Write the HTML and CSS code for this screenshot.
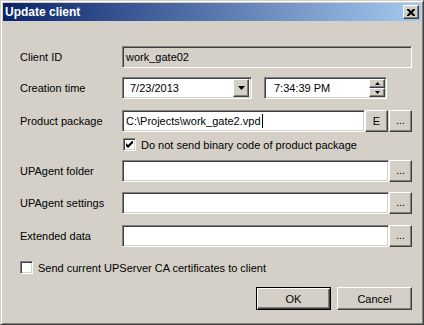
FILE: index.html
```html
<!DOCTYPE html>
<html lang="en">

<head>
    <meta charset="UTF-8">
    <title>Update client</title>
    <link rel="stylesheet" href="styles.css">
</head>

<body>

    <div class="window">
        <div class="titlebar">
            <span class="title">Update client</span>
            <div class="btn caption-btn">
                <svg width="8" height="7" viewBox="0 0 8 7">
                    <path d="M0 0h2l2 2 2-2h2v1l-2.5 2.5 2.5 2.5v1h-2l-2-2-2 2h-2v-1l2.5-2.5-2.5-2.5z" fill="#000" />
                </svg>
            </div>
        </div>

        <div class="content">
            <div class="row row-id">
                <label>Client ID</label>
                <div class="edit disabled">work_gate02</div>
            </div>

            <div class="row row-time">
                <label>Creation time</label>
                <div class="edit date">
                    <span class="value">7/23/2013</span>
                    <div class="btn drop-btn">
                        <svg width="7" height="4" viewBox="0 0 7 4"><path d="M0 0h7l-3.5 4z" fill="#000" /></svg>
                    </div>
                </div>
                <div class="edit time">
                    <span class="value">7:34:39 PM</span>
                    <div class="spin">
                        <div class="btn spin-btn">
                            <svg width="5" height="3" viewBox="0 0 5 3"><path d="M2.5 0l2.5 3h-5z" fill="#000" /></svg>
                        </div>
                        <div class="btn spin-btn">
                            <svg width="5" height="3" viewBox="0 0 5 3"><path d="M0 0h5l-2.5 3z" fill="#000" /></svg>
                        </div>
                    </div>
                </div>
            </div>

            <div class="row row-pkg">
                <label>Product package</label>
                <div class="edit">C:\Projects\work_gate2.vpd<span class="caret"></span></div>
                <div class="btn small-btn">E</div>
                <div class="btn small-btn dots">...</div>
            </div>

            <div class="check-row check-binary">
                <div class="checkbox">
                    <svg width="7" height="7" viewBox="0 0 7 7"><path d="M0 2l2 2 5-5v3l-5 5-2-2z" fill="#000" /></svg>
                </div>
                <span>Do not send binary code of product package</span>
            </div>

            <div class="row row-folder">
                <label>UPAgent folder</label>
                <div class="edit"></div>
                <div class="btn small-btn dots">...</div>
            </div>

            <div class="row row-settings">
                <label>UPAgent settings</label>
                <div class="edit"></div>
                <div class="btn small-btn dots">...</div>
            </div>

            <div class="row row-extended">
                <label>Extended data</label>
                <div class="edit"></div>
                <div class="btn small-btn dots">...</div>
            </div>

            <div class="check-row check-ca">
                <div class="checkbox"></div>
                <span>Send current UPServer CA certificates to client</span>
            </div>

            <div class="actions">
                <div class="btn push-btn default">OK</div>
                <div class="btn push-btn">Cancel</div>
            </div>
        </div>
    </div>

</body>

</html>
```

FILE: styles.css
```css
:root {
    --face: #d4d0c8;
    --shadow: #808080;
    --dark: #404040;
    --light: #ffffff;
}

body {
    margin: 0;
    font-family: 'Liberation Sans', Arial, sans-serif;
    font-size: 11px;
    color: #000;
    background: var(--face);
}

.window {
    width: 424px;
    height: 325px;
    box-sizing: border-box;
    background: var(--face);
    border: 1px solid;
    border-color: var(--face) var(--dark) var(--dark) var(--face);
    box-shadow: inset 1px 1px var(--light), inset -1px -1px var(--shadow);
    padding: 2px;
}

.titlebar {
    height: 18px;
    display: flex;
    align-items: center;
    justify-content: space-between;
    padding: 0 2px;
    background: linear-gradient(to right, #0a246a, #a6caf0);
}

.title {
    color: #fff;
    font-weight: bold;
    font-size: 12px;
}

/* raised 3d edge used by every button */
.btn {
    box-sizing: border-box;
    background: var(--face);
    border: 1px solid;
    border-color: var(--light) var(--dark) var(--dark) var(--light);
    box-shadow: inset -1px -1px var(--shadow);
    display: flex;
    align-items: center;
    justify-content: center;
}

.caption-btn {
    width: 16px;
    height: 14px;
}

.content {
    padding: 0 9px 0 17px;
}

.row {
    display: flex;
    align-items: center;
    height: 22px;
}

.row label {
    width: 102px;
    flex: none;
}

.row-id { margin-top: 25px; }
.row-time { margin-top: 9px; }
.row-pkg { margin-top: 11px; }
.check-binary { margin-top: 6px; margin-left: 103px; }
.row-folder { margin-top: 9px; }
.row-settings { margin-top: 10px; }
.row-extended { margin-top: 11px; }
.check-ca { margin-top: 14px; }

/* sunken edit box */
.edit {
    box-sizing: border-box;
    height: 22px;
    flex: 1;
    background: #fff;
    border: 1px solid;
    border-color: var(--shadow) var(--light) var(--light) var(--shadow);
    box-shadow: inset 1px 1px var(--dark), inset -1px -1px var(--face);
    padding: 0 3px;
    display: flex;
    align-items: center;
    white-space: nowrap;
}

.edit.disabled {
    background: var(--face);
}

.edit.date {
    flex: none;
    width: 130px;
    padding: 2px 2px 2px 7px;
    justify-content: space-between;
}

.edit.time {
    flex: none;
    width: 123px;
    margin-left: 12px;
    padding: 2px 1px 2px 9px;
    justify-content: space-between;
}

.drop-btn {
    width: 16px;
    height: 18px;
}

.spin {
    display: flex;
    flex-direction: column;
    height: 18px;
}

.spin-btn {
    width: 16px;
    height: 9px;
}

.caret {
    width: 1px;
    height: 14px;
    background: #000;
    margin-left: 1px;
}

.small-btn {
    width: 23px;
    height: 22px;
    flex: none;
}

.small-btn + .small-btn {
    margin-left: 1px;
}

.dots {
    align-items: flex-end;
    padding-bottom: 5px;
    line-height: 1;
}

.check-row {
    display: flex;
    align-items: center;
    gap: 5px;
    height: 13px;
}

.checkbox {
    box-sizing: border-box;
    width: 13px;
    height: 13px;
    background: #fff;
    border: 1px solid;
    border-color: var(--shadow) var(--light) var(--light) var(--shadow);
    box-shadow: inset 1px 1px var(--dark), inset -1px -1px var(--face);
    display: flex;
    align-items: center;
    justify-content: center;
}

.actions {
    display: flex;
    justify-content: flex-end;
    gap: 6px;
    margin-top: 13px;
}

.push-btn {
    width: 75px;
    height: 23px;
}

.push-btn.default {
    border-color: #000;
    box-shadow: inset 1px 1px var(--light), inset -1px -1px var(--dark), inset -2px -2px var(--shadow);
}
```
